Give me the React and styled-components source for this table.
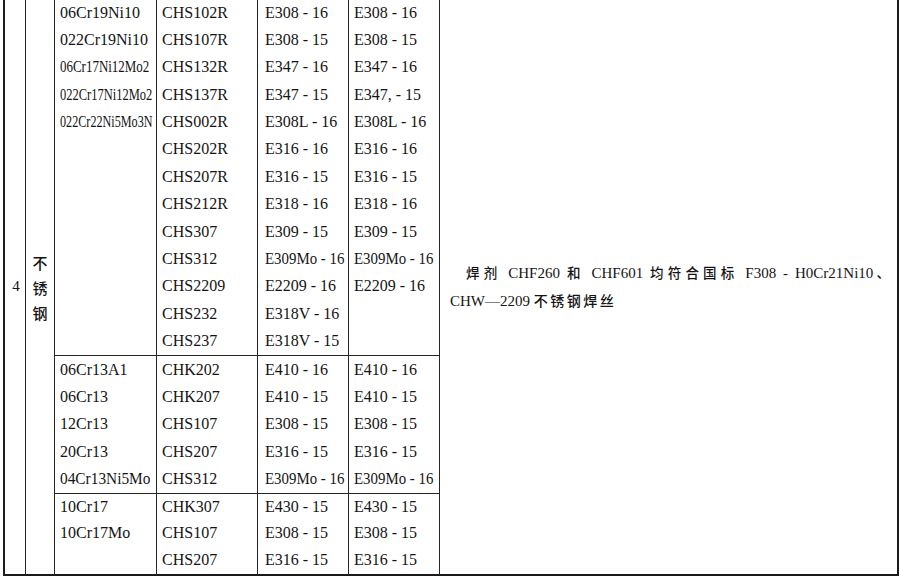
import React from "react";
import styled, { createGlobalStyle } from "styled-components";

const ROW = 27.4;

const GROUPS = [
  {
    grades: [
      ["06Cr19Ni10"],
      ["022Cr19Ni10"],
      ["06Cr17Ni12Mo2", 0.81],
      ["022Cr17Ni12Mo2", 0.78],
      ["022Cr22Ni5Mo3N", 0.76],
    ],
    products: [
      "CHS102R", "CHS107R", "CHS132R", "CHS137R", "CHS002R", "CHS202R",
      "CHS207R", "CHS212R", "CHS307", "CHS312", "CHS2209", "CHS232", "CHS237",
    ],
    std1: [
      ["E308 - 16"], ["E308 - 15"], ["E347 - 16"], ["E347 - 15"], ["E308L - 16"],
      ["E316 - 16"], ["E316 - 15"], ["E318 - 16"], ["E309 - 15"],
      ["E309Mo - 16", 0.93], ["E2209 - 16"], ["E318V - 16"], ["E318V - 15"],
    ],
    std2: [
      ["E308 - 16"], ["E308 - 15"], ["E347 - 16"], ["E347, - 15"], ["E308L - 16"],
      ["E316 - 16"], ["E316 - 15"], ["E318 - 16"], ["E309 - 15"],
      ["E309Mo - 16", 0.93], ["E2209 - 16"],
    ],
  },
  {
    grades: [["06Cr13A1"], ["06Cr13"], ["12Cr13"], ["20Cr13"], ["04Cr13Ni5Mo", 0.96]],
    products: ["CHK202", "CHK207", "CHS107", "CHS207", "CHS312"],
    std1: [["E410 - 16"], ["E410 - 15"], ["E308 - 15"], ["E316 - 15"], ["E309Mo - 16", 0.93]],
    std2: [["E410 - 16"], ["E410 - 15"], ["E308 - 15"], ["E316 - 15"], ["E309Mo - 16", 0.93]],
  },
  {
    grades: [["10Cr17"], ["10Cr17Mo"]],
    products: ["CHK307", "CHS107", "CHS207"],
    std1: [["E430 - 15"], ["E308 - 15"], ["E316 - 15"]],
    std2: [["E430 - 15"], ["E308 - 15"], ["E316 - 15"]],
    row: 26.8,
    last: true,
  },
];

const GlobalStyle = createGlobalStyle`
  html, body {
    margin: 0;
    padding: 0;
    background: #ffffff;
  }
  body {
    width: 900px;
    height: 579px;
    overflow: hidden;
    font-family: "Liberation Serif", "Noto Sans CJK SC", serif;
    color: #141414;
  }
`;

function App() {
  return (
    <>
      <GlobalStyle />
      <Page>
        <Table>
          <colgroup>
            <col style={{ width: 21 }} />
            <col style={{ width: 29 }} />
            <col style={{ width: 102 }} />
            <col style={{ width: 101 }} />
            <col style={{ width: 91 }} />
            <col style={{ width: 91 }} />
            <col style={{ width: 459 }} />
          </colgroup>
          <tbody>
            {GROUPS.map((group, gi) => {
              const row = group.row ?? ROW;
              const renderList = (items) =>
                items.map(([text, sx], i) => (
                  <Line key={i} $h={row}>
                    {sx ? <Squeeze $sx={sx}>{text}</Squeeze> : text}
                  </Line>
                ));
              return (
                <tr key={gi}>
                  {gi === 0 && (
                    <>
                      <IndexCell rowSpan={GROUPS.length} $last>
                        4
                      </IndexCell>
                      <KindCell rowSpan={GROUPS.length} $last>
                        <Han>不</Han>
                        <Han>锈</Han>
                        <Han>钢</Han>
                      </KindCell>
                    </>
                  )}
                  <ListCell $last={group.last}>{renderList(group.grades)}</ListCell>
                  <ListCell $last={group.last}>
                    {renderList(group.products.map((p) => [p]))}
                  </ListCell>
                  <ListCell $last={group.last} $pad={7}>
                    {renderList(group.std1)}
                  </ListCell>
                  <ListCell $last={group.last}>{renderList(group.std2)}</ListCell>
                  {gi === 0 && (
                    <NoteCell rowSpan={GROUPS.length}>
                      <NoteFirst>
                        <NoteHan>焊剂</NoteHan> CHF260 <NoteHan>和</NoteHan> CHF601{" "}
                        <NoteHan>均符合国标</NoteHan> F308 - H0Cr21Ni10<NoteHan>、</NoteHan>
                      </NoteFirst>
                      <NoteLine>
                        CHW—2209 <NoteHan $wide>不锈钢焊丝</NoteHan>
                      </NoteLine>
                    </NoteCell>
                  )}
                </tr>
              );
            })}
          </tbody>
        </Table>
      </Page>
    </>
  );
}

const Page = styled.div`
  padding-left: 3px;
  margin-top: -1.5px;
`;
const Table = styled.table`
  table-layout: fixed;
  width: 896px;
  border-collapse: separate;
  border-spacing: 0;
  border-left: 2px solid #1c1c1c;
  font-size: 16px;
`;
const Cell = styled.td`
  padding: 0;
  border-right: 1px solid #262626;
  border-bottom: ${({ $last }) => ($last ? "2px solid #1a1a1a" : "1px solid #262626")};
`;
const IndexCell = styled(Cell)`
  vertical-align: middle;
  text-align: center;
  font-size: 15px;
  padding-left: 2px;
`;
const KindCell = styled(Cell)`
  vertical-align: middle;
  text-align: center;
  padding-top: 2px;
`;
const Han = styled.div`
  font-family: "Noto Sans CJK SC", sans-serif;
  font-size: 15px;
  font-weight: 500;
  line-height: 25px;
`;
const ListCell = styled(Cell)`
  vertical-align: top;
  padding-left: ${({ $pad }) => $pad ?? 5}px;
`;
const Line = styled.div`
  height: ${({ $h }) => $h}px;
  line-height: ${({ $h }) => $h}px;
  white-space: nowrap;
`;
const Squeeze = styled.span`
  display: inline-block;
  transform: scaleX(${({ $sx }) => $sx});
  transform-origin: left center;
`;
const NoteCell = styled(Cell)`
  vertical-align: middle;
  padding: 2px 10px 0 10px;
  border-right: 2px solid #1a1a1a;
  border-bottom: 2px solid #1a1a1a;
  font-size: 15px;
`;
const NoteLine = styled.div`
  line-height: 27px;
  white-space: nowrap;
`;
const NoteFirst = styled(NoteLine)`
  text-indent: 16px;
  text-align: justify;
  text-align-last: justify;
  padding-right: 0;
  margin-right: -4px;
`;
const NoteHan = styled.span`
  font-family: "Noto Sans CJK SC", sans-serif;
  font-size: ${({ $wide }) => ($wide ? "14px" : "13.5px")};
  font-weight: 500;
  letter-spacing: ${({ $wide }) => ($wide ? "2.5px" : "1px")};
`;

export default App;
